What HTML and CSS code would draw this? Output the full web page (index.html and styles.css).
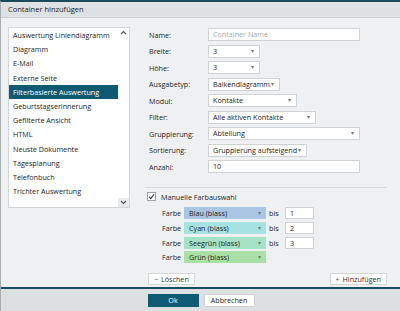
FILE: index.html
```html
<!DOCTYPE html>
<html>
<head>
    <title>Container hinzufügen</title>
    <link rel="stylesheet" href="styles.css">
</head>
<body>
    <div class="dialog">
        <div class="titlebar">Container hinzufügen</div>

        <div class="main">
            <div class="listbox">
                <ul class="items">
                    <li>Auswertung Liniendiagramm</li>
                    <li>Diagramm</li>
                    <li>E-Mail</li>
                    <li>Externe Seite</li>
                    <li class="selected">Filterbasierte Auswertung</li>
                    <li>Geburtstagserinnerung</li>
                    <li>Gefilterte Ansicht</li>
                    <li>HTML</li>
                    <li>Neuste Dokumente</li>
                    <li>Tagesplanung</li>
                    <li>Telefonbuch</li>
                    <li>Trichter Auswertung</li>
                </ul>
                <div class="scrollbar">
                    <span class="scroll-btn up">
                        <svg width="7" height="5" viewBox="0 0 7 5"><path d="M1 4 L3.5 1.5 L6 4" fill="none" stroke="#555" stroke-width="1.1"/></svg>
                    </span>
                    <span class="scroll-btn down">
                        <svg width="7" height="5" viewBox="0 0 7 5"><path d="M1 1 L3.5 3.5 L6 1" fill="none" stroke="#555" stroke-width="1.1"/></svg>
                    </span>
                </div>
            </div>

            <div class="form">
                <div class="row">
                    <label>Name:</label>
                    <div class="input wide placeholder">Container Name</div>
                </div>
                <div class="row">
                    <label>Breite:</label>
                    <div class="select w-small">3<span class="arrow">▾</span></div>
                </div>
                <div class="row">
                    <label>Höhe:</label>
                    <div class="select w-small">3<span class="arrow">▾</span></div>
                </div>
                <div class="row">
                    <label>Ausgabetyp:</label>
                    <div class="select w-typ">Balkendiagramm<span class="arrow">▾</span></div>
                </div>
                <div class="row">
                    <label>Modul:</label>
                    <div class="select w-modul">Kontakte<span class="arrow">▾</span></div>
                </div>
                <div class="row">
                    <label>Filter:</label>
                    <div class="select w-filter">Alle aktiven Kontakte<span class="arrow">▾</span></div>
                </div>
                <div class="row">
                    <label>Gruppierung:</label>
                    <div class="select wide">Abteilung<span class="arrow">▾</span></div>
                </div>
                <div class="row">
                    <label>Sortierung:</label>
                    <div class="select w-sort">Gruppierung aufsteigend<span class="arrow">▾</span></div>
                </div>
                <div class="row">
                    <label>Anzahl:</label>
                    <div class="input wide">10</div>
                </div>

                <div class="separator"></div>

                <div class="check-row">
                    <span class="checkbox">
                        <svg width="7" height="7" viewBox="0 0 7 7"><path d="M1 3.8 L2.8 5.6 L6 1.2" fill="none" stroke="#333" stroke-width="1.1"/></svg>
                    </span>
                    Manuelle Farbauswahl
                </div>

                <div class="colors">
                    <div class="color-row">
                        <span class="color-label">Farbe</span>
                        <div class="select color blau">Blau (blass)<span class="arrow">▾</span></div>
                        <span class="bis">bis</span>
                        <div class="input num">1</div>
                    </div>
                    <div class="color-row">
                        <span class="color-label">Farbe</span>
                        <div class="select color cyan">Cyan (blass)<span class="arrow">▾</span></div>
                        <span class="bis">bis</span>
                        <div class="input num">2</div>
                    </div>
                    <div class="color-row">
                        <span class="color-label">Farbe</span>
                        <div class="select color seegruen">Seegrün (blass)<span class="arrow">▾</span></div>
                        <span class="bis">bis</span>
                        <div class="input num">3</div>
                    </div>
                    <div class="color-row">
                        <span class="color-label">Farbe</span>
                        <div class="select color gruen">Grün (blass)<span class="arrow">▾</span></div>
                    </div>
                </div>

                <div class="actions">
                    <button class="small-btn"><span class="sign">−</span> Löschen</button>
                    <button class="small-btn"><span class="sign">+</span> Hinzufügen</button>
                </div>
            </div>
        </div>

        <div class="footer">
            <button class="btn primary">Ok</button>
            <button class="btn">Abbrechen</button>
        </div>
    </div>
</body>
</html>
```

FILE: styles.css
```css
* {
    box-sizing: border-box;
}

body {
    margin: 0;
    font-family: 'Open Sans', 'Noto Sans', sans-serif;
    font-size: 7.2px;
    color: #1e1e1e;
    background-color: #eef0f2;
}

.dialog {
    width: 400px;
    height: 311px;
    border-top: 2px solid #1c4c5b;
    border-left: 1px solid #a9adb0;
    display: flex;
    flex-direction: column;
}

.titlebar {
    height: 16px;
    line-height: 15px;
    padding-left: 7px;
    background-color: #dee2e4;
    border-bottom: 1px solid #cdd1d4;
    font-size: 7.5px;
    color: #222;
}

.main {
    flex: 1;
    display: flex;
    padding: 9px 0 0 7px;
}

/* list on the left */
.listbox {
    width: 122px;
    height: 181px;
    background-color: #fff;
    border: 1px solid #d3d6d9;
    display: flex;
}

.items {
    flex: 1;
    list-style: none;
    margin: 0;
    padding: 0;
}

.items li {
    height: 14.2px;
    line-height: 14.2px;
    padding-left: 4px;
    color: #1e1e1e;
    white-space: nowrap;
}

.items li.selected {
    background-color: #0f5a72;
    color: #fff;
}

.scrollbar {
    width: 11px;
    display: flex;
    flex-direction: column;
    justify-content: space-between;
}

.scroll-btn {
    height: 9px;
    display: flex;
    align-items: center;
    justify-content: center;
}

.scroll-btn.down {
    background-color: #e9eaeb;
}

/* form on the right */
.form {
    width: 242px;
    margin-left: 15px;
    margin-top: -0.5px;
}

.row {
    height: 16.5px;
    display: flex;
    align-items: center;
}

.row label {
    width: 63px;
    padding-left: 4px;
    color: #1e1e1e;
}

.input,
.select {
    height: 13px;
    line-height: 11px;
    background-color: #fff;
    border: 1px solid #cfd3d6;
    padding-left: 4px;
    padding-right: 10px;
    color: #1e1e1e;
    white-space: nowrap;
    overflow: hidden;
    position: relative;
}

.placeholder {
    color: #a8abae;
}

.arrow {
    position: absolute;
    right: 5px;
    top: 0;
    color: #777;
    font-size: 6px;
}

.wide { width: 152px; }
.w-small { width: 52px; }
.w-typ { width: 72px; }
.w-modul { width: 89px; }
.w-filter { width: 108px; }
.w-sort { width: 99px; }

.separator {
    height: 1px;
    background-color: #d9dcdf;
    margin-top: 12px;
}

.check-row {
    display: flex;
    align-items: center;
    height: 17px;
    padding-left: 2px;
    color: #1e1e1e;
}

.checkbox {
    width: 9px;
    height: 9px;
    background-color: #fff;
    border: 1px solid #9ea2a5;
    margin-right: 5px;
    display: flex;
    align-items: center;
    justify-content: center;
}

.colors {
    padding-left: 17px;
    margin-top: 1px;
}

.color-row {
    height: 14.7px;
    display: flex;
    align-items: center;
}

.color-label {
    width: 22px;
    color: #1e1e1e;
}

.select.color {
    width: 82px;
    height: 12px;
    line-height: 12px;
    border: none;
    padding-left: 5px;
}

.blau { background-color: #a9c5e4; }
.cyan { background-color: #a6e2e2; }
.seegruen { background-color: #a5e2c5; }
.gruen { background-color: #a8e0a6; }

.bis {
    margin-left: 3px;
    width: 16px;
    color: #1e1e1e;
}

.input.num {
    width: 29px;
    height: 12px;
    line-height: 10px;
}

.actions {
    display: flex;
    justify-content: space-between;
    margin-top: 8px;
    padding-left: 3px;
}

.small-btn {
    height: 12px;
    padding: 0 5px;
    font-family: inherit;
    font-size: 7.2px;
    color: #333;
    background-color: #fff;
    border: 1px solid #d3d6d9;
    line-height: 10px;
}

.sign {
    color: #555;
    margin-right: 1px;
}

.footer {
    height: 24px;
    border-top: 2px solid #154f60;
    background-color: #dde0e2;
    display: flex;
    justify-content: center;
    align-items: center;
    gap: 5px;
    padding-left: 1px;
}

.btn {
    width: 51px;
    height: 13px;
    padding: 0;
    font-family: inherit;
    font-size: 7.2px;
    color: #1e1e1e;
    background-color: #fff;
    border: 1px solid #cfd3d6;
}

.btn.primary {
    background-color: #0e5b73;
    border-color: #0e5b73;
    color: #fff;
}
```
